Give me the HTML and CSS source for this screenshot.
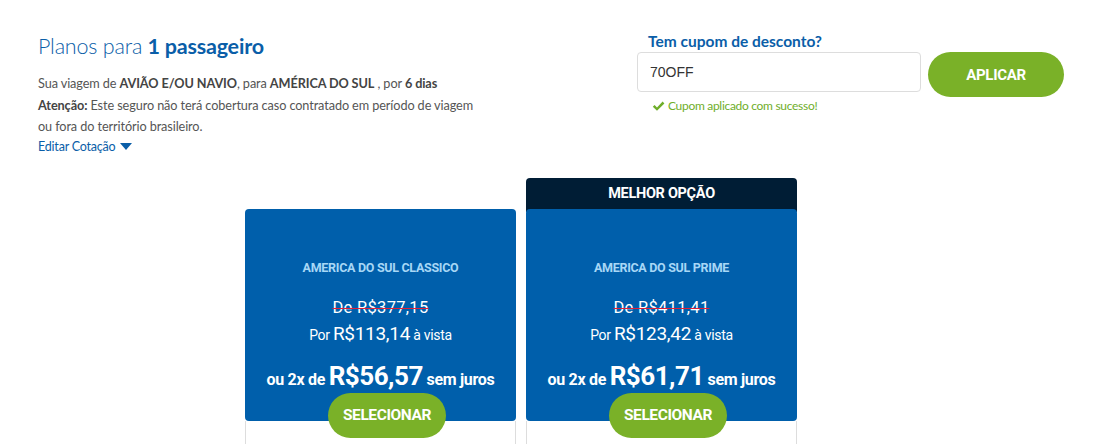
FILE: index.html
```html
<!DOCTYPE html>
<html lang="pt-BR">
<head>
<meta charset="utf-8">
<title>Planos</title>
<link rel="stylesheet" href="styles.css">
</head>
<body>
<div class="page">
  <header class="top">
    <section class="summary">
      <h1 class="title"><span class="light">Planos para</span> <strong>1 passageiro</strong></h1>
      <p class="info">Sua viagem de <b>AVIÃO E/OU NAVIO</b>, para <b>AMÉRICA DO SUL</b> , por <b>6 dias</b><br>
      <b>Atenção:</b> Este seguro não terá cobertura caso contratado em período de viagem<br>
      ou fora do território brasileiro.</p>
      <a class="edit" href="#">Editar Cotação <svg class="caret" width="12" height="8" viewBox="0 0 12 8"><path d="M0 0H12L6 7Z" fill="#0a5ea8"/></svg></a>
    </section>
    <section class="coupon">
      <label class="coupon-label">Tem cupom de desconto?</label>
      <div class="coupon-row">
        <div class="coupon-input">70OFF</div>
        <button class="btn btn-apply">APLICAR</button>
      </div>
      <p class="coupon-ok"><svg class="check" width="13" height="11" viewBox="0 0 13 11"><path d="M0.8 5.8L2.6 4.1L5 6.4L10.6 0.6L12.4 2.4L5 9.8Z" fill="#6fae2a"/></svg>Cupom aplicado com sucesso!</p>
    </section>
  </header>

  <main class="plans">
    <article class="plan">
      <div class="plan-badge plan-badge-empty"></div>
      <div class="plan-body">
        <h2 class="plan-name">AMERICA DO SUL CLASSICO</h2>
        <p class="plan-old"><s>De R$377,15</s></p>
        <p class="plan-now">Por <span class="now-val">R$113,14</span> à vista</p>
        <p class="plan-inst">ou 2x de <span class="inst-val">R$56,57</span> sem juros</p>
      </div>
      <div class="plan-foot"><button class="btn btn-select">SELECIONAR</button></div>
    </article>
    <article class="plan">
      <div class="plan-badge">MELHOR OPÇÃO</div>
      <div class="plan-body">
        <h2 class="plan-name">AMERICA DO SUL PRIME</h2>
        <p class="plan-old"><s>De R$411,41</s></p>
        <p class="plan-now">Por <span class="now-val">R$123,42</span> à vista</p>
        <p class="plan-inst">ou 2x de <span class="inst-val">R$61,71</span> sem juros</p>
      </div>
      <div class="plan-foot"><button class="btn btn-select">SELECIONAR</button></div>
    </article>
  </main>
</div>
</body>
</html>
```

FILE: styles.css
```css
* { box-sizing: border-box; }
html, body { margin: 0; padding: 0; background: #fff; }
body { font-family: Lato, "Open Sans", sans-serif; color: #555; overflow: hidden; height: 444px; }

.page { width: 1097px; }

.top { display: flex; padding: 30px 0 0 38px; }
.summary { width: 599px; }
.title { margin: 0; font-size: 21.5px; line-height: 32px; font-weight: 400; color: #0a5ea8; letter-spacing: -0.2px; }
.title .light { font-weight: 300; }
.title strong { font-weight: 700; }
.info { margin: 11px 0 0; font-size: 12.7px; line-height: 21.5px; color: #555; letter-spacing: -0.1px; }
.info b { font-weight: 700; color: #444; }
.edit { display: flex; width: fit-content; align-items: center; gap: 4px; margin-top: 1px; font-size: 12.5px; line-height: 16px; color: #0a5ea8; text-decoration: none; letter-spacing: -0.2px; }

.coupon { display: flex; flex-direction: column; padding-top: 0; }
.coupon-label { margin-left: 11px; font-size: 15.5px; font-weight: 700; color: #0a5ea8; line-height: 22px; }
.coupon-row { display: flex; gap: 7px; margin-top: 0; }
.coupon-input { width: 284px; height: 40px; border: 1px solid #ddd; border-radius: 4px; padding: 0 12px; display: flex; align-items: center; font-family: "Liberation Sans", Arial, sans-serif; font-size: 14px; color: #333; }
.btn { border: 0; cursor: pointer; color: #fff; background: #7ab128; font-family: Roboto, "Liberation Sans", sans-serif; font-weight: 700; border-radius: 23px; }
.btn-apply { width: 136px; height: 45px; font-size: 15px; letter-spacing: -0.3px; }
.coupon-ok { display: flex; align-items: center; gap: 3px; margin: 0 0 0 15px; font-size: 12px; color: #6fae2a; line-height: 18px; letter-spacing: -0.3px; }

.plans { display: flex; gap: 10px; padding-left: 245px; margin-top: 23px; }
.plan { width: 271px; display: flex; flex-direction: column; }
.plan-badge { height: 34px; margin-bottom: -3px; background: #001d35; color: #fff; border-radius: 4px 4px 0 0; text-align: center; font-family: Roboto, sans-serif; font-weight: 700; font-size: 14.5px; line-height: 32px; letter-spacing: -0.3px; }
.plan-badge-empty { background: transparent; }
.plan-body { position: relative; background: #005fab; border-radius: 4px; height: 212px; text-align: center; color: #fff; padding-top: 51px; font-family: Roboto, sans-serif; }
.plan-name { margin: 0; font-size: 12.5px; font-weight: 700; color: #a7d7f6; letter-spacing: -0.3px; line-height: 16px; }
.plan-old { margin: 23px 0 0; font-size: 16.5px; line-height: 18px; letter-spacing: 0.3px; }
.plan-old s { text-decoration-color: #e0203a; text-decoration-thickness: 1px; }
.plan-now { margin: 6px 0 0; font-size: 14px; line-height: 22px; letter-spacing: -0.3px; }
.now-val { font-size: 19px; }
.plan-inst { margin: 16px 0 0; font-size: 16px; font-weight: 700; line-height: 28px; letter-spacing: -0.3px; }
.inst-val { font-size: 26px; letter-spacing: -0.5px; }
.plan-foot { height: 40px; border-left: 1px solid #ddd; border-right: 1px solid #ddd; display: flex; justify-content: center; align-items: flex-start; }
.btn-select { position: relative; flex: none; margin-top: -28px; margin-left: 13px; width: 118px; height: 45px; font-size: 15.5px; letter-spacing: -0.4px; }
```
